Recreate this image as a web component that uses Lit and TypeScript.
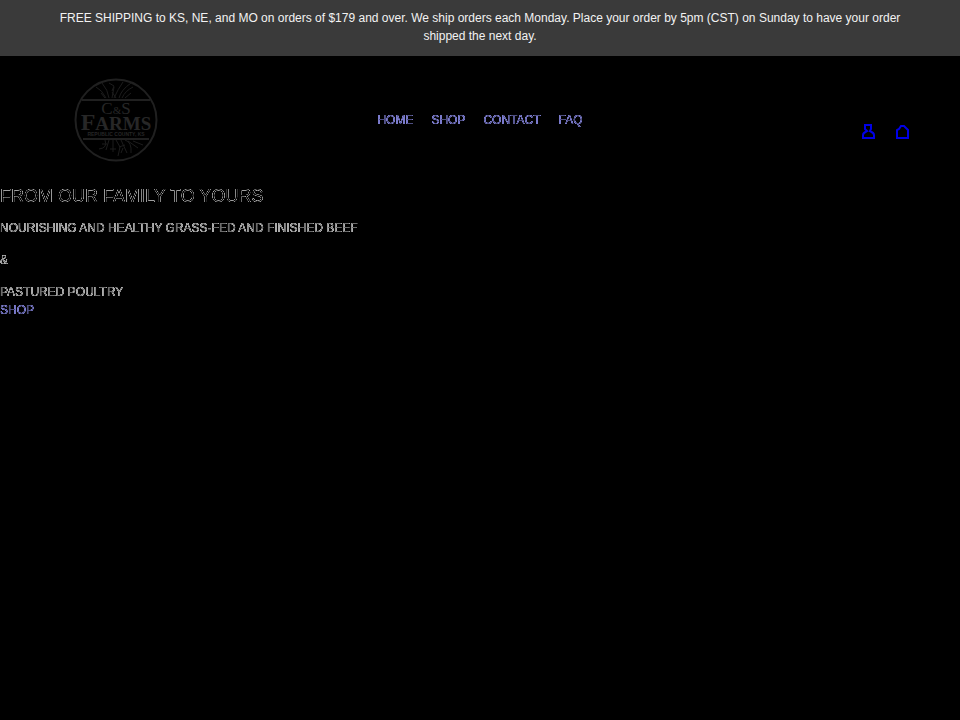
import { LitElement, html, css, svg } from "lit";
import { customElement } from "lit/decorators.js";

const links = ["HOME", "SHOP", "CONTACT", "FAQ"];

@customElement("farm-logo")
class FarmLogo extends LitElement {
  static styles = css`
    :host { display: block; width: 84px; height: 84px; }
    svg { display: block; width: 100%; height: 100%; }
    .line { fill: none; stroke: #202020; stroke-width: 2; }
    .thin { fill: none; stroke: #1d1d1d; stroke-width: 1; }
    text { fill: #272727; font-family: "Liberation Serif", serif; text-anchor: middle; }
    .initials { font-size: 17px; }
    .amp { font-size: 11px; }
    .name { font-size: 24px; font-weight: bold; }
    .small { font-size: 19px; }
    .place { font-size: 5px; font-weight: bold; font-family: "Liberation Sans", sans-serif; }
  `;
  render() {
    return html`<svg viewBox="0 0 84 84" role="img" aria-label="C&S Farms">
      ${svg`
        <circle class="line" cx="42" cy="42" r="40.5" />
        <path class="line" d="M8 22H76M9 61H75" />
        <path class="thin" d="M32 20Q28 12 22 9M35 20Q34 12 28 5M38 20L40 9M40 20Q44 11 49 4M45 20Q47 12 57 5M48 20Q51 13 59 9M31 20L27 15M51 20L57 15M42 20L38 14M35 5L40 8L38 13" />
        <path class="thin" d="M31 62Q34 70 25 71M35 62L32 72M39 62V74M42 62L46 69L44 78M47 62L53 75M51 62Q58 64 57 75M54 63L64 70M59 63L69 67M33 66L28 66M45 69L51 67M36 71H42M49 70L47 75" />
        <text class="initials" x="42" y="36">C<tspan class="amp">&amp;</tspan>S</text>
        <text class="name" x="42" y="52">F<tspan class="small">ARMS</tspan></text>
        <text class="place" x="42" y="58">REPUBLIC COUNTY, KS</text>
      `}
    </svg>`;
  }
}

@customElement("app-root")
class AppRoot extends LitElement {
  static styles = css`
    :host {
      display: block;
      min-height: 100vh;
      background: #000;
      color: #d8d8d8;
      font: 12px/18px "Liberation Sans", Arial, sans-serif;
    }
    .banner { background: #3a3a3a; color: #f2f2f2; padding: 9px 54px 11px; text-align: center; }
    .banner p { margin: 0; }
    .header {
      display: grid;
      grid-template-columns: 1fr auto 1fr;
      align-items: center;
      padding: 22px 50px;
    }
    .brand { justify-self: start; margin-left: 24px; }
    nav { display: flex; gap: 18px; }
    a { color: #9a9aff; text-decoration: none; }
    .edge { filter: url(#edge); }
    .soft { filter: url(#soft); }
    .tools { display: flex; gap: 20px; justify-self: end; padding-top: 24px; }
    button { display: block; padding: 0; border: 0; background: none; color: #0000e6; }
    .icon { display: block; width: 14px; height: 16px; fill: none; stroke: currentColor; stroke-width: 2; }
    .defs { position: absolute; width: 0; height: 0; }
    h1 { margin: 0 0 12px; font-size: 18px; line-height: 22px; font-weight: 400; }
    .intro { padding-top: 1px; }
    .intro p { margin: 0 0 14px; }
    .intro .last { margin: 0; }
    .shop { display: inline-block; }
  `;
  render() {
    return html`
      <svg class="defs" aria-hidden="true">
        <filter id="edge" color-interpolation-filters="sRGB">
          <feComponentTransfer><feFuncA type="table" tableValues="0 0.8 0" /></feComponentTransfer>
        </filter>
        <filter id="soft" color-interpolation-filters="sRGB">
          <feComponentTransfer><feFuncA type="table" tableValues="0 0.8 0.8 0.5" /></feComponentTransfer>
        </filter>
      </svg>
      <div class="banner">
        <p>FREE SHIPPING to KS, NE, and MO on orders of $179 and over. We ship orders each Monday. Place your order by 5pm (CST) on Sunday to have your order shipped the next day.</p>
      </div>
      <header class="header">
        <a class="brand" href="#"><farm-logo></farm-logo></a>
        <nav>${links.map((l) => html`<a class="soft" href="#">${l}</a>`)}</nav>
        <div class="tools">
          <button aria-label="Account">
            <svg class="icon" viewBox="0 0 14 16"><path d="M3 1H9V5L8 7Q12 9 12 11V14H1V11Q1 9 5 7L3 5Z" /></svg>
          </button>
          <button aria-label="Cart">
            <svg class="icon" viewBox="0 0 14 16"><path d="M1 14V6L3 5L5 2H8L11 5L12 6V14Z" /></svg>
          </button>
        </div>
      </header>
      <main class="intro">
        <h1 class="edge">FROM OUR FAMILY TO YOURS</h1>
        <p class="soft">NOURISHING AND HEALTHY GRASS-FED AND FINISHED BEEF</p>
        <p class="soft">&amp;</p>
        <p class="soft last">PASTURED POULTRY</p>
        <a class="soft shop" href="#">SHOP</a>
      </main>
    `;
  }
}
